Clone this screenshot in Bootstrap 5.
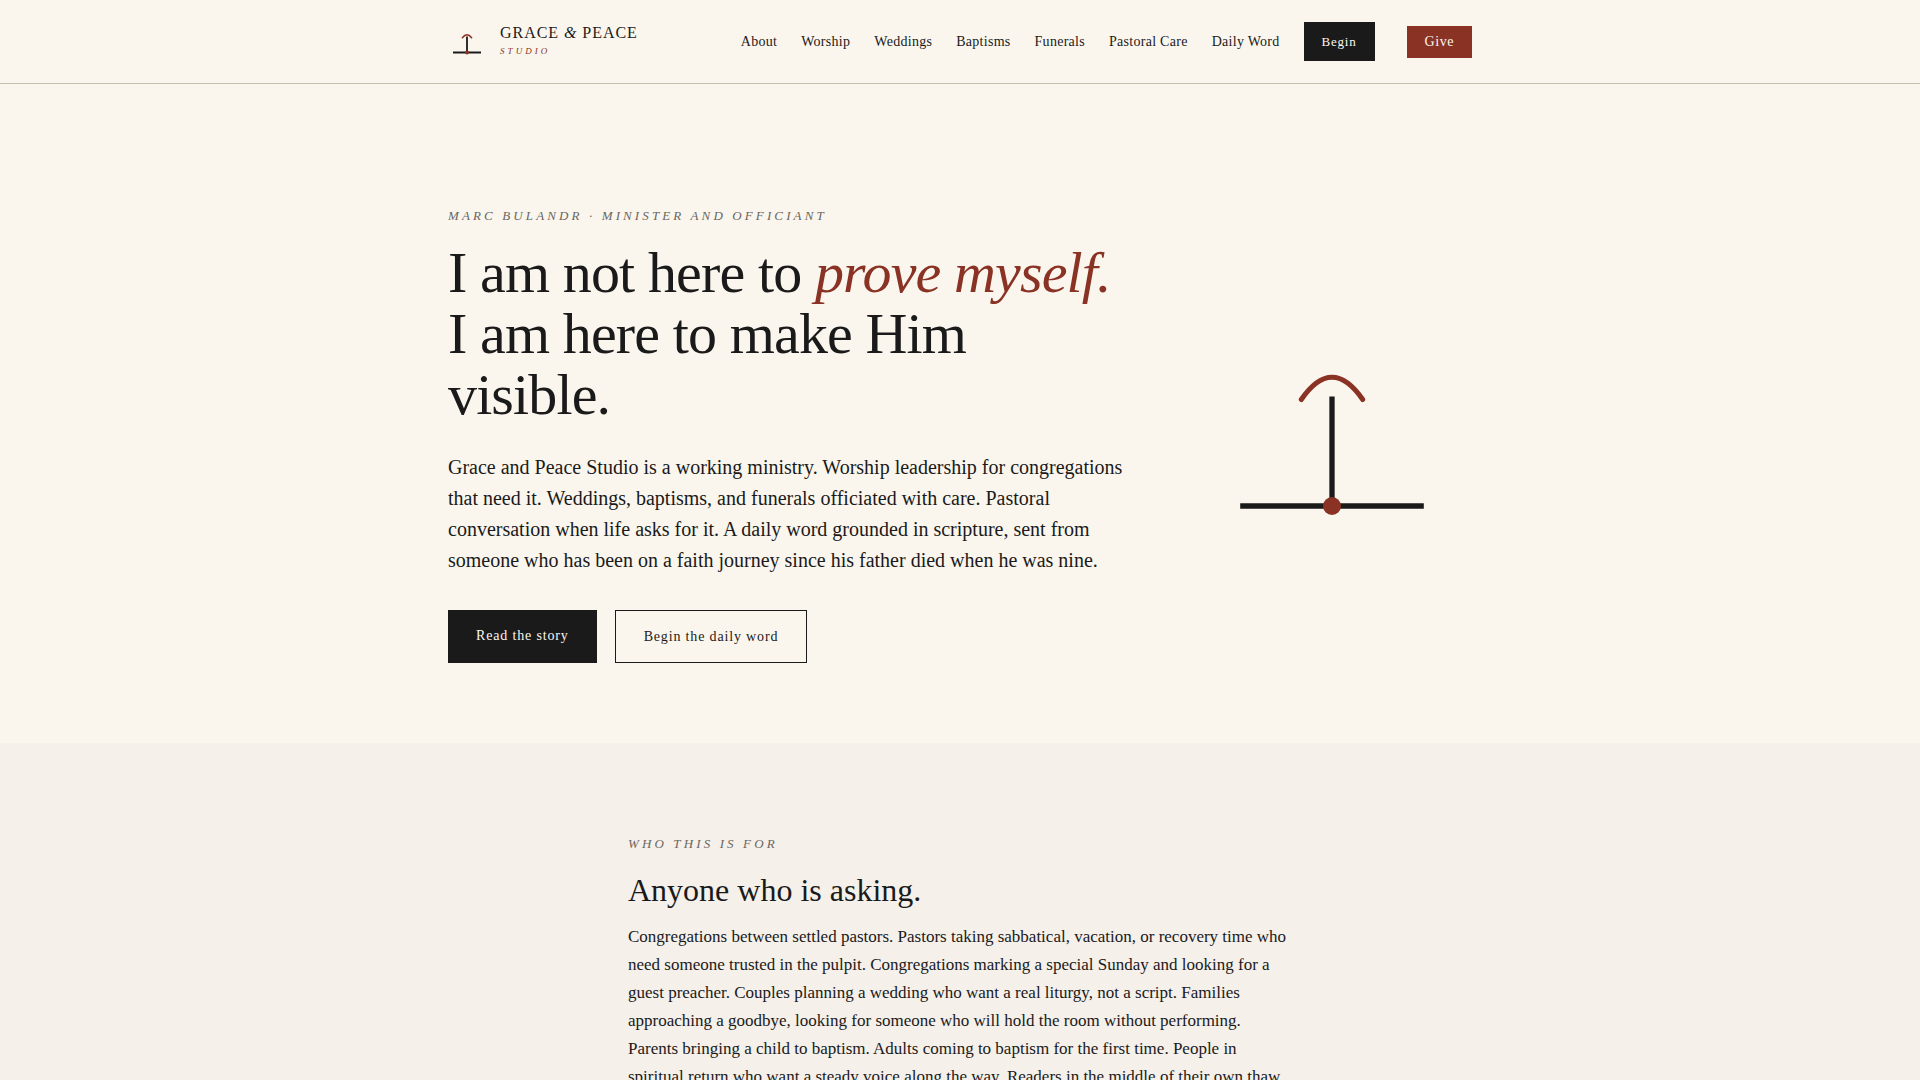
<!DOCTYPE html>
<html lang="en">
<head>
<meta charset="utf-8">
<meta name="viewport" content="width=device-width, initial-scale=1">
<title>Grace &amp; Peace Studio</title>
<link href="https://cdn.jsdelivr.net/npm/bootstrap@5.3.0/dist/css/bootstrap.min.css" rel="stylesheet">
<style>
:root{--ink:#1a1a1a;--paper:#faf6ee;--rust:#8a3324;--stone:#f5f0ea;--rule:#c4bfae;--muted:#6b665e}
body{font-family:"Liberation Serif",serif;font-size:17px;line-height:28px;color:var(--ink);background:var(--paper)}
.wrap{max-width:1120px;padding-left:48px;padding-right:48px}
.wrap-narrow{max-width:760px;padding-left:48px;padding-right:48px}
.site-head{border-bottom:1px solid var(--rule)}
.head-row{min-height:83px}
.brand{gap:14px;color:var(--ink)}
.brand-name{font-size:16px;line-height:19px;letter-spacing:.06em}
.brand-sub{font-size:9px;line-height:18px;letter-spacing:.34em;font-style:italic;color:var(--rust)}
.menu{gap:24px;font-size:14px;line-height:24px;letter-spacing:.02em}
.menu a{color:var(--ink);text-decoration:none}
.menu .cta-begin{background:var(--ink);color:var(--paper);font-size:13px;line-height:23px;letter-spacing:.06em;padding:8px 18px}
.menu .cta-give{background:var(--rust);color:var(--paper);letter-spacing:.04em;padding:4px 18px;margin-left:8px}
.hero{padding-top:120px;padding-bottom:80px}
.hero-row{gap:64px}
.hero-art{width:280px}
.eyebrow{font-size:13px;line-height:24px;letter-spacing:.24em;font-style:italic;text-transform:uppercase;color:var(--muted);margin-bottom:14px}
.hero h1{font-size:58px;line-height:61px;font-weight:400;letter-spacing:-.015em;margin-bottom:27px}
.hero h1 em{color:var(--rust)}
.intro{font-size:20px;line-height:31px;margin-bottom:34px}
.actions{gap:18px}
.act{font-size:14px;line-height:23px;letter-spacing:.06em;padding:14px 28px;text-decoration:none;color:var(--ink)}
.act-solid{background:var(--ink);color:var(--paper)}
.act-line{border:1px solid var(--ink)}
.who{background:var(--stone);padding:89px 0}
.who h2{font-size:32px;line-height:40px;font-weight:400;margin-bottom:13px}
</style>
</head>
<body>
<header class="site-head">
  <div class="wrap container-fluid head-row d-flex align-items-center justify-content-between">
    <a href="#" class="brand d-flex align-items-center text-decoration-none">
      <svg width="38" height="38" viewBox="0 0 38 38" fill="none" aria-hidden="true">
        <path d="M5 29.5H33M19 13.5V29.5" stroke="#1a1a1a" stroke-width="1.8"/>
        <path d="M14.4 14.7Q19 8.7 23.6 14.7" stroke="#8a3324" stroke-width="1.6" stroke-linecap="round"/>
        <circle cx="19" cy="29.5" r="2" fill="#8a3324"/>
      </svg>
      <span class="d-flex flex-column"><span class="brand-name">GRACE <em>&amp;</em> PEACE</span><span class="brand-sub">STUDIO</span></span>
    </a>
    <nav class="menu d-flex align-items-center" aria-label="Main">
      <a href="#">About</a>
      <a href="#">Worship</a>
      <a href="#">Weddings</a>
      <a href="#">Baptisms</a>
      <a href="#">Funerals</a>
      <a href="#">Pastoral Care</a>
      <a href="#">Daily Word</a>
      <a href="#" class="cta-begin">Begin</a>
      <a href="#" class="cta-give">Give</a>
    </nav>
  </div>
</header>
<main>
  <section class="hero">
    <div class="wrap container-fluid hero-row d-flex align-items-center">
      <div class="flex-grow-1">
        <div class="eyebrow">Marc Bulandr · Minister and Officiant</div>
        <h1>I am not here to <em>prove myself.</em><br>I am here to make Him visible.</h1>
        <p class="intro">Grace and Peace Studio is a working ministry. Worship leadership for congregations that need it. Weddings, baptisms, and funerals officiated with care. Pastoral conversation when life asks for it. A daily word grounded in scripture, sent from someone who has been on a faith journey since his father died when he was nine.</p>
        <div class="actions d-flex">
          <a href="#" class="act act-solid">Read the story</a>
          <a href="#" class="act act-line">Begin the daily word</a>
        </div>
      </div>
      <div class="hero-art flex-shrink-0">
        <svg class="d-block mx-auto" width="240" height="240" viewBox="0 0 240 240" fill="none" aria-hidden="true">
          <path d="M28.2 192H211.8M120 82.5V192" stroke="#1a1a1a" stroke-width="5.3"/>
          <path d="M89.3 85.5Q120 41 150.7 85.5" stroke="#8a3324" stroke-width="5" stroke-linecap="round"/>
          <circle cx="120" cy="192" r="9" fill="#8a3324"/>
        </svg>
      </div>
    </div>
  </section>
  <section class="who">
    <div class="wrap-narrow container-fluid">
      <div class="eyebrow">Who this is for</div>
      <h2>Anyone who is asking.</h2>
      <p>Congregations between settled pastors. Pastors taking sabbatical, vacation, or recovery time who need someone trusted in the pulpit. Congregations marking a special Sunday and looking for a guest preacher. Couples planning a wedding who want a real liturgy, not a script. Families approaching a goodbye, looking for someone who will hold the room without performing. Parents bringing a child to baptism. Adults coming to baptism for the first time. People in spiritual return who want a steady voice along the way. Readers in the middle of their own thaw.</p>
    </div>
  </section>
</main>
<script src="https://cdn.jsdelivr.net/npm/bootstrap@5.3.0/dist/js/bootstrap.bundle.min.js"></script>
</body>
</html>
